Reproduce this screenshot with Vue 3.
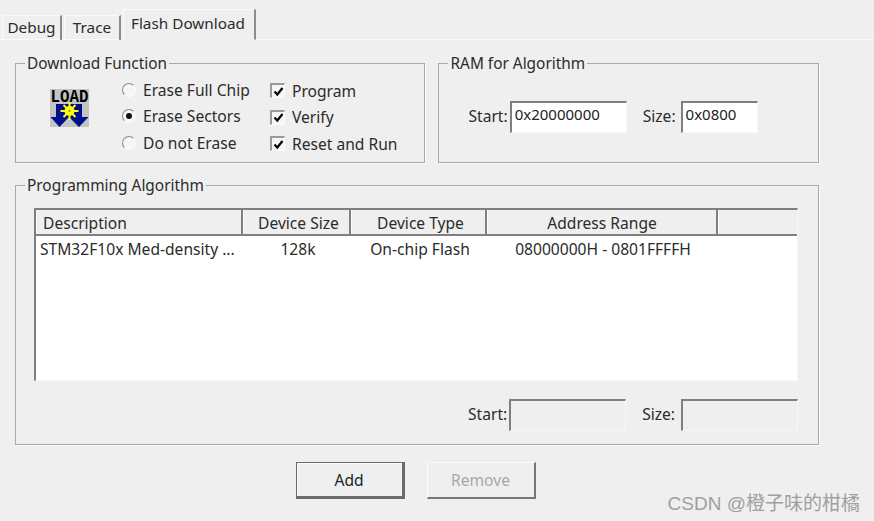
<template>
  <div class="dialog">
    <!-- Tabs -->
    <div class="tabs">
      <div v-for="tab in tabs" :key="tab.name" :class="['tab', { active: tab.active }]" :style="{ width: tab.width + 'px' }">
        {{ tab.name }}
      </div>
    </div>

    <div class="body">
      <div class="top-row">
        <!-- Download Function -->
        <fieldset class="group download">
          <legend>Download Function</legend>
          <svg class="load-icon" width="39" height="38" viewBox="0 0 39 38">
            <rect width="39" height="38" fill="#c4c4c4" />
            <text x="19.500" y="13" textLength="38" lengthAdjust="spacingAndGlyphs" text-anchor="middle" class="load-text">LOAD</text>
            <path d="M6 15H32V28H38.500L29 38L20 29H18L9.500 38L0.500 28H6Z" fill="#000f8c" />
            <g stroke="#ffff00" stroke-width="2">
              <path d="M19.500 13V31M10.500 22H28.500M13.500 16L25.500 28M25.500 16L13.500 28" />
            </g>
            <circle cx="19.500" cy="22" r="5" fill="#ffff00" />
            <circle cx="19.500" cy="22" r="1" fill="#8a8a40" />
          </svg>
          <div class="radios">
            <label v-for="opt in eraseOptions" :key="opt" class="option">
              <span :class="['radio', { on: opt === 'Erase Sectors' }]"></span>{{ opt }}
            </label>
          </div>
          <div class="checks">
            <label v-for="opt in checkOptions" :key="opt" class="option">
              <span class="check">
                <svg width="11" height="11" viewBox="0 0 11 11"><path d="M1.500 5.500l2.800 3L9.500 2" fill="none" stroke="#000" stroke-width="2.200" /></svg>
              </span>{{ opt }}
            </label>
          </div>
        </fieldset>

        <!-- RAM for Algorithm -->
        <fieldset class="group ram">
          <legend>RAM for Algorithm</legend>
          <span class="field-label first">Start:</span>
          <div class="input start">0x20000000</div>
          <span class="field-label size-label">Size:</span>
          <div class="input ram-size">0x0800</div>
        </fieldset>
      </div>

      <!-- Programming Algorithm -->
      <fieldset class="group algo">
        <legend>Programming Algorithm</legend>
        <div class="algo-inner">
          <div class="table">
            <div class="thead">
              <div v-for="col in columns" :key="col.label" :class="['th', col.cls]" :style="{ width: col.width + 'px' }">{{ col.label }}</div>
            </div>
            <div class="tbody">
              <div class="cell desc">STM32F10x Med-density ...</div>
              <div class="cell size">128k</div>
              <div class="cell type">On-chip Flash</div>
              <div class="cell range">08000000H - 0801FFFFH</div>
            </div>
          </div>
          <div class="range-row">
            <span class="field-label">Start:</span>
            <div class="input disabled start"></div>
            <span class="field-label size-label">Size:</span>
            <div class="input disabled wide"></div>
          </div>
        </div>
      </fieldset>

      <!-- Buttons -->
      <div class="buttons">
        <button class="btn default">Add</button>
        <button class="btn" disabled>Remove</button>
      </div>
    </div>

    <div class="watermark">CSDN @橙子味的柑橘</div>
  </div>
</template>

<script setup>
const tabs = [
  { name: 'Debug', width: 60 },
  { name: 'Trace', width: 57 },
  { name: 'Flash Download', width: 133, active: true }
]

const eraseOptions = ['Erase Full Chip', 'Erase Sectors', 'Do not Erase']
const checkOptions = ['Program', 'Verify', 'Reset and Run']

const columns = [
  { label: 'Description', width: 207, cls: 'left' },
  { label: 'Device Size', width: 108, cls: 'nudge' },
  { label: 'Device Type', width: 136, cls: 'nudge' },
  { label: 'Address Range', width: 231 },
  { label: '', width: 78 }
]
</script>

<style>
html,
body {
  margin: 0;
  background: #efefef;
}
</style>

<style scoped>
.dialog {
  position: relative;
  width: 874px;
  height: 521px;
  overflow: hidden;
  background: #efefef;
  font-family: "Noto Sans", "Open Sans", sans-serif;
  font-size: 15.6px;
  color: #2b2b2b;
}

/* =========================
   TABS
========================= */
.tabs {
  display: flex;
  align-items: flex-end;
  gap: 2px;
  height: 40px;
  padding-left: 2px;
  box-sizing: border-box;
  border-bottom: 1px solid #fafafa;
  font-size: 15.300px;
}

.tab {
  box-sizing: border-box;
  height: 25px;
  line-height: 22px;
  margin-bottom: -1px;
  text-align: center;
  border-top: 1px solid #fafafa;
  border-left: 1px solid #fafafa;
  border-right: 2px solid #8c8c8c;
}

.tab.active {
  height: 31px;
  line-height: 26px;
  padding-right: 2px;
  background: #efefef;
  border-bottom: 1px solid #efefef;
}

/* =========================
   GROUPS
========================= */
.body {
  display: flex;
  flex-direction: column;
  padding: 13px 0 0 15px;
  width: 804px;
}

.top-row {
  display: flex;
  gap: 13px;
}

.group {
  box-sizing: border-box;
  margin: 0;
  padding: 0;
  min-width: 0;
  border: 1px solid #a9a9a9;
  box-shadow: 1px 1px 0 #fbfbfb;
  display: flex;
  align-items: center;
}

.group legend {
  margin-left: 9px;
  padding: 0 2px;
  font-size: 15.400px;
  line-height: 21px;
  height: 20px;
}

.download {
  width: 411px;
  height: 110px;
}

.load-icon {
  align-self: flex-start;
  margin: 16px 0 0 34px;
  flex-shrink: 0;
  overflow: visible;
}

.radios {
  margin-left: 33px;
  width: 148px;
  margin-top: -3px;
}

.checks {
  margin-top: -1px;
}

.option {
  display: flex;
  align-items: center;
  height: 26.500px;
  white-space: nowrap;
}

.radio {
  box-sizing: border-box;
  position: relative;
  width: 14px;
  height: 14px;
  margin-right: 7px;
  border-radius: 50%;
  background: #f6f6f6;
  border: 1px solid;
  border-color: #8a8a8a #fbfbfb #fbfbfb #8a8a8a;
}

.radio.on::after {
  content: "";
  position: absolute;
  left: 3px;
  top: 3px;
  width: 6px;
  height: 6px;
  border-radius: 50%;
  background: #111;
}

.check {
  box-sizing: border-box;
  display: flex;
  align-items: center;
  justify-content: center;
  width: 15px;
  height: 15px;
  margin-right: 7px;
  background: #f6f6f6;
  border-style: solid;
  border-width: 2px 1px 1px 2px;
  border-color: #9a9a9a #fbfbfb #fbfbfb #9a9a9a;
}

.ram {
  width: 381px;
  height: 110px;
  padding-bottom: 2px;
}

.field-label {
  margin-right: 2px;
  margin-bottom: 2px;
}

.field-label.first {
  margin-left: 29px;
}

.size-label {
  margin-left: 16px;
  margin-right: 5px;
}

.input {
  box-sizing: border-box;
  height: 32px;
  padding-left: 3px;
  font-size: 15px;
  line-height: 22px;
  background: #fff;
  border-style: solid;
  border-width: 2px 1px 1px 2px;
  border-color: #7f7f7f #f7f7f7 #f7f7f7 #7f7f7f;
  color: #222;
}

.start {
  width: 117px;
}

.ram-size {
  width: 77px;
}

.input.disabled {
  background: #efefef;
}

.input.wide {
  width: 117px;
  margin-left: 1px;
}

.algo {
  display: block;
  width: 804px;
  height: 270px;
  margin-top: 12px;
}

.algo-inner {
  padding: 13px 20px 0 18px;
}

/* =========================
   TABLE
========================= */
.table {
  box-sizing: border-box;
  width: 764px;
  height: 173px;
  background: #fff;
  border-style: solid;
  border-width: 2px 1px 1px 2px;
  border-color: #7f7f7f #f7f7f7 #f7f7f7 #7f7f7f;
}

.thead {
  display: flex;
  height: 26px;
  background: #efefef;
  border-bottom: 2px solid #7f7f7f;
  box-sizing: border-box;
}

.th {
  box-sizing: border-box;
  text-align: center;
  line-height: 26px;
  border-right: 2px solid #7f7f7f;
  border-left: 1px solid #fbfbfb;
}

.th.left {
  text-align: left;
  padding-left: 6px;
}

.th.nudge {
  padding-left: 4px;
}

.th:last-child {
  border-right: none;
}

.tbody {
  display: flex;
  height: 25px;
  align-items: center;
}

.cell {
  box-sizing: border-box;
  text-align: center;
  white-space: nowrap;
}

.cell.desc {
  width: 208px;
  padding-left: 4px;
  text-align: left;
}

.cell.size {
  width: 108px;
}

.cell.type {
  width: 136px;
}

.cell.range {
  width: 230px;
}

.range-row {
  display: flex;
  align-items: center;
  margin-top: 18px;
  padding-left: 434px;
}

/* =========================
   BUTTONS
========================= */
.buttons {
  display: flex;
  justify-content: center;
  gap: 22px;
  margin-top: 17px;
  padding-right: 3px;
}

.btn {
  box-sizing: border-box;
  width: 109px;
  height: 37px;
  padding: 0;
  background: #efefef;
  font: inherit;
  color: #222;
  border-style: solid;
  border-width: 1px 2px 2px 1px;
  border-color: #fbfbfb #777 #777 #fbfbfb;
}

.btn.default {
  border-width: 1px 3px 3px 1px;
  border-color: #6a6a6a;
  box-shadow: inset 1px 1px 0 #fbfbfb;
}

.btn:disabled {
  color: #a8a8a8;
}

.load-text {
  font-family: "Liberation Mono", monospace;
  font-weight: 700;
  font-size: 19px;
  fill: #000;
}

.watermark {
  position: absolute;
  right: 14px;
  bottom: 6px;
  font-family: "Liberation Sans", "Noto Sans CJK SC", sans-serif;
  font-size: 19px;
  color: #a0a0a0;
}
</style>
